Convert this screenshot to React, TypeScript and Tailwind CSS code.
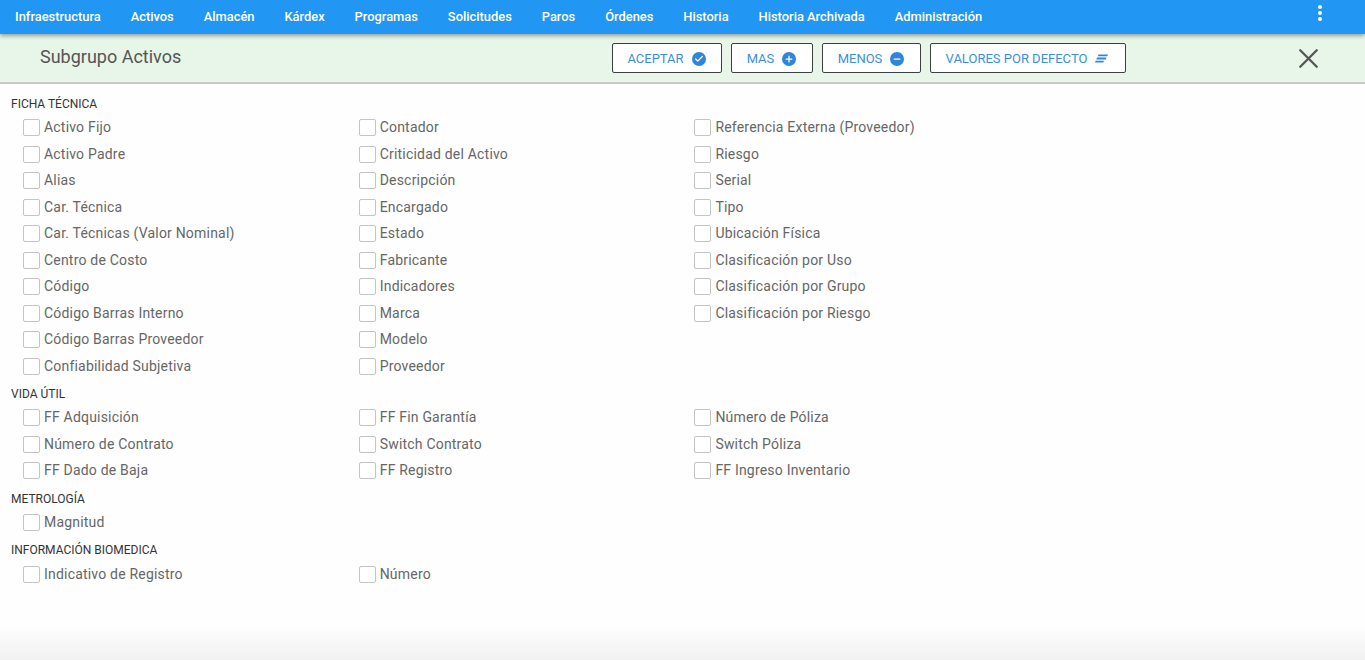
import { Check, Plus, Minus, X } from "lucide-react";

const menu = ["Infraestructura", "Activos", "Almacén", "Kárdex", "Programas", "Solicitudes", "Paros", "Órdenes", "Historia", "Historia Archivada", "Administración"];

const sections = [
	{
		title: "FICHA TÉCNICA",
		rows: [
			["Activo Fijo", "Contador", "Referencia Externa (Proveedor)"],
			["Activo Padre", "Criticidad del Activo", "Riesgo"],
			["Alias", "Descripción", "Serial"],
			["Car. Técnica", "Encargado", "Tipo"],
			["Car. Técnicas (Valor Nominal)", "Estado", "Ubicación Física"],
			["Centro de Costo", "Fabricante", "Clasificación por Uso"],
			["Código", "Indicadores", "Clasificación por Grupo"],
			["Código Barras Interno", "Marca", "Clasificación por Riesgo"],
			["Código Barras Proveedor", "Modelo"],
			["Confiabilidad Subjetiva", "Proveedor"],
		],
	},
	{
		title: "VIDA ÚTIL",
		rows: [
			["FF Adquisición", "FF Fin Garantía", "Número de Póliza"],
			["Número de Contrato", "Switch Contrato", "Switch Póliza"],
			["FF Dado de Baja", "FF Registro", "FF Ingreso Inventario"],
		],
	},
	{ title: "METROLOGÍA", rows: [["Magnitud"]] },
	{ title: "INFORMACIÓN BIOMEDICA", rows: [["Indicativo de Registro", "Número"]] },
];

function CircleIcon({ children }: { children: React.ReactNode }) {
	return <span className="flex h-[14px] w-[14px] items-center justify-center rounded-full bg-[#2f86d8] text-white">{children}</span>;
}

function ActionButton({ label, width, children }: { label: string; width: string; children: React.ReactNode }) {
	return (
		<button className={`flex h-[30px] items-center justify-center gap-[8px] rounded-[2px] border border-[#3c4043] bg-white pr-[1px] pt-[1px] text-[13px] text-[#3a8fdc] ${width}`}>
			{label}
			{children}
		</button>
	);
}

export default function App() {
	return (
		<div className="flex h-[660px] flex-col overflow-hidden bg-[#fefefe] font-['Roboto',sans-serif]">
			<nav className="relative z-10 flex h-[34px] items-center justify-between bg-[#2196f3] pl-[15px] pr-[42px] shadow-[0_2px_4px_rgba(0,0,0,0.35)]">
				<div className="flex gap-[29.95px] text-[12.9px] font-medium text-white">
					{menu.map((item) => (
						<span key={item}>{item}</span>
					))}
				</div>
				<svg width="6" height="20" viewBox="0 0 6 20" className="mb-[9px] fill-white">
					<circle cx="3" cy="4" r="2" />
					<circle cx="3" cy="10" r="2" />
					<circle cx="3" cy="16" r="2" />
				</svg>
			</nav>
			<header className="flex h-[50px] items-center border-b-2 border-[#cbc8c8] bg-[#e8f6e9] pl-[40px] pr-[40.5px]">
				<h1 className="mb-[3px] w-[572px] text-[18px] text-[#555555]">Subgrupo Activos</h1>
				<div className="flex gap-[9px]">
					<ActionButton label="ACEPTAR" width="w-[110px]">
						<CircleIcon>
							<Check size={10} strokeWidth={3} />
						</CircleIcon>
					</ActionButton>
					<ActionButton label="MAS" width="w-[82px]">
						<CircleIcon>
							<Plus size={10} strokeWidth={3} />
						</CircleIcon>
					</ActionButton>
					<ActionButton label="MENOS" width="w-[99px]">
						<CircleIcon>
							<Minus size={10} strokeWidth={3} />
						</CircleIcon>
					</ActionButton>
					<ActionButton label="VALORES POR DEFECTO" width="w-[196px]">
						<svg width="14" height="9" viewBox="0 0 14 9" className="fill-[#2f86d8]">
							<path d="M3.5 .5h9.5l-.7 1.8H2.8zM2 3.6h9.5l-.7 1.8H1.300zM.7 6.700h8.300l-.7 1.800H0z" />
						</svg>
					</ActionButton>
				</div>
				<X size={33} strokeWidth={1.7} className="ml-auto text-[#555]" />
			</header>
			<main className="flex flex-col gap-[4.5px] pt-[10px]">
				{sections.map((section) => (
					<section key={section.title} className="[&:last-child>div]:pt-[0.5px]">
						<h2 className="flex h-[20.5px] items-center pl-[11px] text-[12px] text-[#333]">{section.title}</h2>
						<div className="pl-[23px]">
							{section.rows.map((row) => (
								<div key={row.join()} className="grid h-[26.5px] grid-cols-[335.7px_335.7px_335.7px] items-center">
									{row.map((label) => (
										<label key={label} className="flex items-center gap-[4px] text-[14px] tracking-[0.2px] text-[#666666]">
											<span className="h-[17px] w-[17px] rounded-[2px] border border-[#c4c4c4] bg-white" />
											{label}
										</label>
									))}
								</div>
							))}
						</div>
					</section>
				))}
			</main>
			<div className="flex-1" />
			<div className="h-[35px] bg-gradient-to-b from-[#fefefe] to-[#f1f1f1]" />
		</div>
	);
}
